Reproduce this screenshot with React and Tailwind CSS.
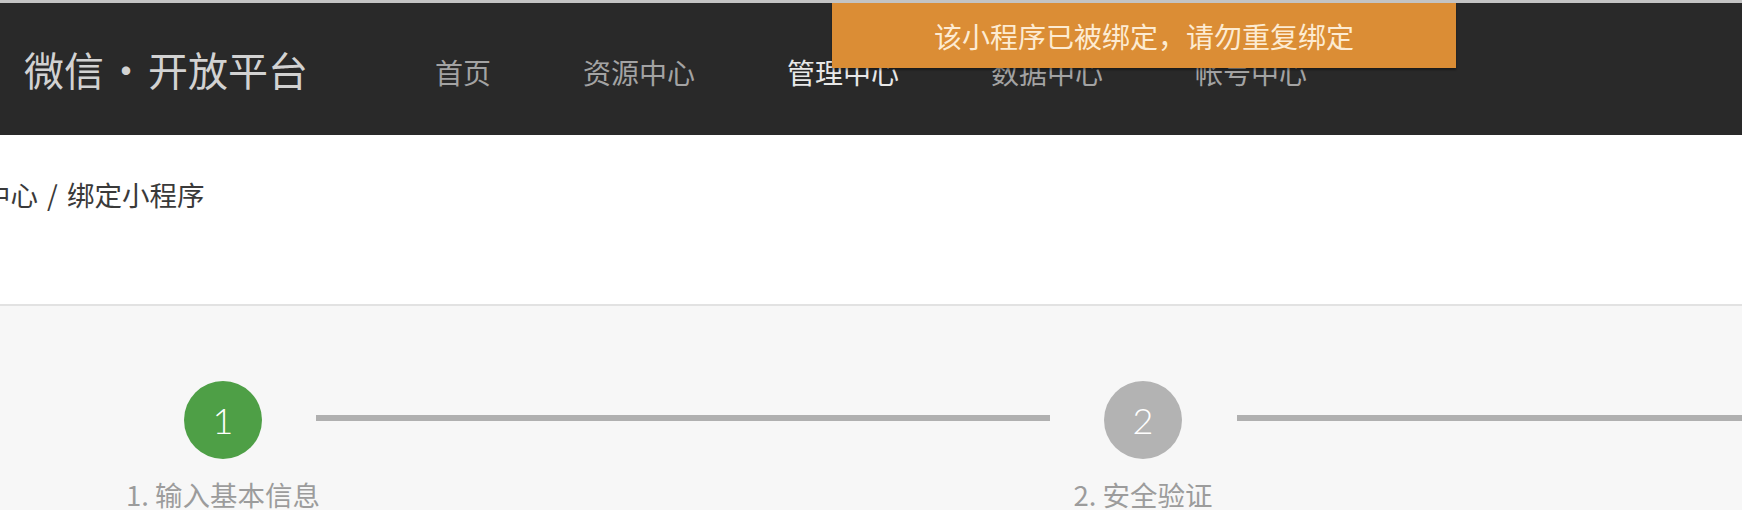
import React from "react";

const CJK = { fontFamily: '"Noto Sans CJK SC", "Noto Sans", sans-serif' };

function Step({ n, label, active }) {
  return (
    <div className="flex w-[78px] shrink-0 flex-col items-center">
      <div
        className={`flex h-[78px] w-[78px] items-center justify-center rounded-full text-[36px] font-light text-white ${
          active ? "bg-[#4e9f46]" : "bg-[#b3b3b3]"
        }`}
        style={{ fontFamily: '"Lato", "Noto Sans", sans-serif', fontWeight: 300 }}
      >
        {n}
      </div>
      <div className="mt-[19px] whitespace-nowrap text-[27.5px] leading-[32px] text-[#9c9c9c]">
        {label}
      </div>
    </div>
  );
}

export default function App() {
  return (
    <div className="relative h-[510px] w-[1742px] overflow-hidden bg-[#f7f7f7]" style={CJK}>
      <div className="h-[3px] bg-[#c4c4c4]" />
      <header className="flex h-[132px] items-center bg-[#292929] pl-[24px]">
        <div className="flex items-center text-[40px] leading-none text-[#d2d2d2]">
          <span>微信</span>
          <span className="inline-block w-[44px] text-center">·</span>
          <span>开放平台</span>
        </div>
        <nav className="ml-[127px] mt-[6px] flex gap-[92px] text-[28px] leading-none text-[#a3a3a3]">
          <span>首页</span>
          <span>资源中心</span>
          <span className="text-[#e8e8e8]">管理中心</span>
          <span>数据中心</span>
          <span>帐号中心</span>
        </nav>
      </header>
      <section className="h-[171px] border-b-2 border-[#e2e2e2] bg-white pt-[43px]">
        <div className="ml-[-72px] flex whitespace-nowrap text-[27.5px] leading-[32px] text-[#3a3a3a]">
          <span>管理中心</span>
          <span className="inline-block w-[29px] text-center">/</span>
          <span>绑定小程序</span>
        </div>
      </section>
      <div className="flex items-start pl-[184px] pt-[75px]">
        <Step n="1" label="1. 输入基本信息" active />
        <div className="mx-[54px] mt-[34px] h-[6px] w-[734px] shrink-0 bg-[#b0b0b0]" />
        <Step n="2" label="2. 安全验证" />
        <div className="ml-[55px] mt-[34px] h-[6px] flex-1 bg-[#b0b0b0]" />
      </div>
      <div className="absolute left-[832px] top-[3px] flex h-[65px] w-[624px] items-center justify-center bg-[#db8d35] text-[28px] text-[#fdebd2] shadow-[0_2px_2px_rgba(0,0,0,0.35)]">
        该小程序已被绑定，请勿重复绑定
      </div>
    </div>
  );
}
